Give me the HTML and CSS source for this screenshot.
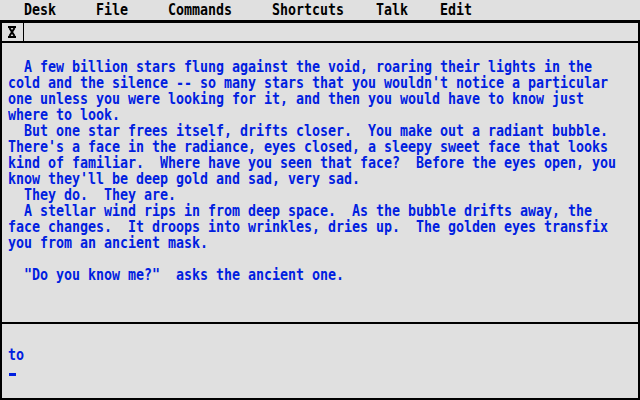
FILE: index.html
```html
<!DOCTYPE html>
<html lang="en">
<head>
<meta charset="utf-8">
<title>Talk</title>
<link rel="stylesheet" href="styles.css">
</head>
<body>
<div class="screen">
  <nav class="menubar">
    <span class="menu-title">Desk</span>
    <span class="menu-title">File</span>
    <span class="menu-title">Commands</span>
    <span class="menu-title">Shortcuts</span>
    <span class="menu-title tight">Talk</span>
    <span class="menu-title tight">Edit</span>
  </nav>
  <div class="window">
    <div class="titlebar">
      <div class="closer">
        <svg width="8" height="12" viewBox="0 0 8 12" aria-hidden="true">
          <rect x="0" y="0" width="8" height="2" fill="#000"/>
          <rect x="0" y="10" width="8" height="2" fill="#000"/>
          <path d="M1.5 2 L6.5 10 M6.5 2 L1.5 10" stroke="#000" stroke-width="2" fill="none"/>
        </svg>
      </div>
    </div>
    <div class="output">
<pre class="text">  A few billion stars flung against the void, roaring their lights in the
cold and the silence -- so many stars that you wouldn't notice a particular
one unless you were looking for it, and then you would have to know just
where to look.
  But one star frees itself, drifts closer.  You make out a radiant bubble.
There's a face in the radiance, eyes closed, a sleepy sweet face that looks
kind of familiar.  Where have you seen that face?  Before the eyes open, you
know they'll be deep gold and sad, very sad.
  They do.  They are.
  A stellar wind rips in from deep space.  As the bubble drifts away, the
face changes.  It droops into wrinkles, dries up.  The golden eyes transfix
you from an ancient mask.

  "Do you know me?"  asks the ancient one.</pre>
    </div>
    <div class="input">
      <pre class="text">to</pre>
      <div class="cursor"></div>
    </div>
  </div>
</div>
</body>
</html>
```
FILE: styles.css
```css
html, body {
  margin: 0;
  padding: 0;
  overflow: hidden;
  background: #e0e0e0;
}

.screen {
  width: 640px;
  height: 400px;
  display: flex;
  flex-direction: column;
  background: #e0e0e0;
  font-family: "DejaVu Sans Mono", "Liberation Mono", monospace;
  font-weight: bold;
  font-size: 16px;
  line-height: 16px;
}

.menubar {
  height: 20px;
  box-sizing: border-box;
  padding: 2px 0 0 24px;
  display: flex;
  gap: 40px;
  color: #000;
}

.menu-title {
  display: inline-block;
  white-space: pre;
  height: 16px;
}

.menu-title.tight {
  margin-left: -8px;
}

.menu-title,
.text {
  transform: scaleX(0.8306);
  transform-origin: 0 0;
}

.menu-title:nth-child(1) { width: 32px; }
.menu-title:nth-child(2) { width: 32px; }
.menu-title:nth-child(3) { width: 64px; }
.menu-title:nth-child(4) { width: 72px; }
.menu-title:nth-child(5) { width: 32px; }
.menu-title:nth-child(6) { width: 32px; }

.window {
  flex: 1;
  display: flex;
  flex-direction: column;
  border: 2px solid #000;
  border-top-width: 3px;
  overflow: hidden;
}

.titlebar {
  height: 18px;
  border-bottom: 2px solid #000;
  display: flex;
}

.closer {
  width: 15px;
  padding-left: 6px;
  border-right: 1px solid #000;
  display: flex;
  align-items: center;
}

.closer svg {
  display: block;
}

.output {
  height: 281px;
  border-bottom: 2px solid #000;
  padding: 16px 0 0 6px;
  box-sizing: border-box;
}

.text {
  margin: 0;
  font: inherit;
  line-height: 16px;
  color: #0020e0;
  white-space: pre;
}

.input {
  flex: 1;
  padding: 23px 0 0 6px;
}

.cursor {
  width: 7px;
  height: 3px;
  margin: 10px 0 0 1px;
  background: #0020e0;
}
```
